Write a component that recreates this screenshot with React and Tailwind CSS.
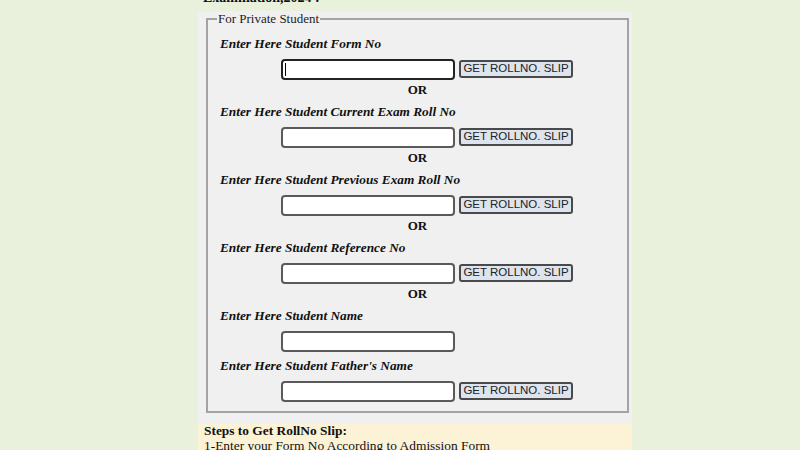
import React from 'react';

const serif = { fontFamily: '"Liberation Serif", "Times New Roman", serif' };

function InputRow({ button = true, focused = false }) {
  return (
    <div className="flex items-center h-[22px] pl-[61px] gap-[4px]">
      <div className="relative">
        <input
          type="text"
          className={`block w-[174px] h-[21px] bg-white rounded-[4px] border-2 outline-none ${focused ? 'border-[#222]' : 'border-[#5a5a5a]'}`}
        />
        {focused && <span className="absolute left-[4px] top-[4px] w-px h-[13px] bg-black" />}
      </div>
      {button && (
        <button
          type="button"
          className="w-[114px] h-[18px] bg-[#dde4ee] border-2 border-[#4a4a4a] rounded-[3px] text-[11.5px] leading-none text-[#222]"
          style={{ fontFamily: '"Liberation Sans", Arial, sans-serif' }}
        >
          GET ROLLNO. SLIP
        </button>
      )}
    </div>
  );
}

function Label({ children }) {
  return (
    <div className="h-[22px] leading-[22px] text-[13.3px] font-bold italic text-[#111]">{children}</div>
  );
}

function Or() {
  return (
    <div className="h-[20px] leading-[20px] text-center text-[13px] font-bold text-[#111]">OR</div>
  );
}

export default function App() {
  const sections = [
    'Enter Here Student Form No',
    'Enter Here Student Current Exam Roll No',
    'Enter Here Student Previous Exam Roll No',
    'Enter Here Student Reference No',
  ];

  return (
    <div className="w-[800px] h-[450px] overflow-hidden bg-[#e9f1dc]" style={serif}>
      <div className="ml-[198px] w-[434px]">
        <div className="h-[12px] overflow-hidden pl-[5px]">
          <div className="-mt-[10px] text-[14px] leading-[16px] font-bold text-[#111]">Examination,2024 :</div>
        </div>

        <div className="bg-[#f0f0f0] pt-[6px] pb-[10px] pl-[8px] pr-[3px]">
          <div className="relative border-2 border-[#a3a3a3] pt-[13px] pb-[9px] px-[12px]">
            <span className="absolute left-[9px] -top-[9px] px-[1px] bg-[#f0f0f0] text-[13px] leading-[16px] text-[#222]">
              For Private Student
            </span>
            {sections.map((s, i) => (
              <div key={s}>
                <Label>{s}</Label>
                <div className="mt-[3px]">
                  <InputRow focused={i === 0} />
                </div>
                <Or />
                <div className="h-px" />
              </div>
            ))}
            <Label>Enter Here Student Name</Label>
            <div className="mt-[3px]">
              <InputRow button={false} />
            </div>
            <div className="mt-[3px]">
              <Label>Enter Here Student Father's Name</Label>
            </div>
            <div className="mt-[3px]">
              <InputRow />
            </div>
          </div>
        </div>

        <div className="bg-[#fcf2d6] px-[6px] pt-[1px] h-[40px] text-[13.4px] leading-[14px] text-[#111]">
          <div className="font-bold">Steps to Get RollNo Slip:</div>
          <div className="pt-px">1-Enter your Form No According to Admission Form</div>
        </div>
      </div>
    </div>
  );
}
